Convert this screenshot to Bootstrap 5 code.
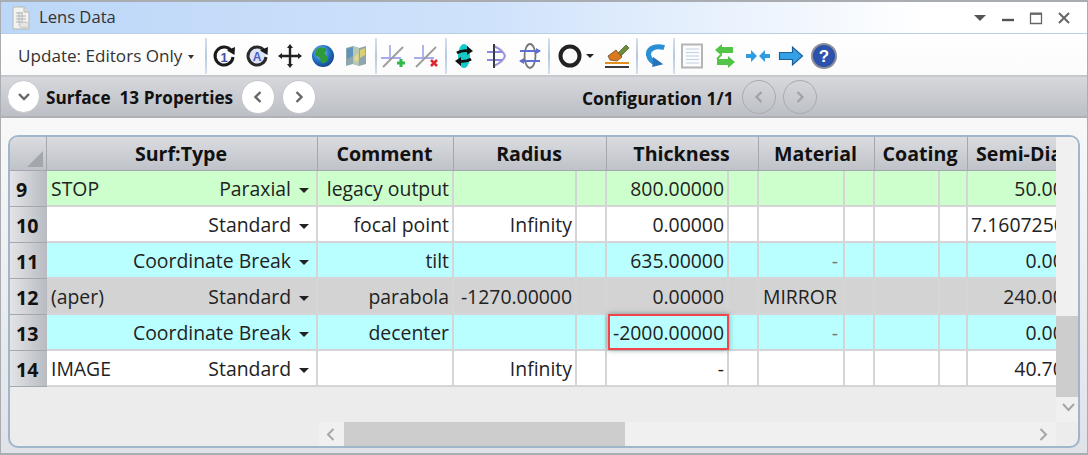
<!DOCTYPE html>
<html lang="en">
<head>
<meta charset="utf-8">
<title>Lens Data</title>
<link href="https://cdn.jsdelivr.net/npm/bootstrap@5.3.0/dist/css/bootstrap.min.css" rel="stylesheet">
<style>
html,body{height:100%;margin:0;background:#dfe3e8;overflow:hidden}
body{font-family:"Open Sans","Noto Sans",sans-serif;color:#222;font-size:19.4px}
.lens-win{height:455px;width:1088px;border:1px solid #a9adb2;border-bottom:2px solid #a9adb2;border-top:2px solid #a9adb2;overflow:hidden}
.title-bar{height:32px;background:linear-gradient(90deg,#bcd7f8 0%,#cfe2fb 45%,#fff 85%,#fff 100%);border-bottom:1px solid #b9cfe6;padding-left:10px;font-size:16.6px;color:#333}
.title-name{margin-left:8px}
.title-ctl{margin-left:auto;margin-right:9px}
.ctl-cell{width:28px;height:22px}
.tool-bar{height:43px;background:linear-gradient(#fff,#fbfbfb);border-bottom:2px solid #c5c8cc;padding-left:17px;padding-top:2px}
.update-btn{width:187px;font-size:17.1px;color:#333;white-space:nowrap}
.update-btn.dropdown-toggle::after{border-width:4px 3.5px 0;margin-left:6px;vertical-align:3px}
.tb-sep{width:2px;height:36px;background:linear-gradient(#d3e1ef,#b4c9de 50%,#d3e1ef);flex:none}
.tb-btn{width:33px;height:36px;flex:none}
.ring-cell{width:24px}
.caret-cell{width:16px}
.sp-a{margin-left:3px}
.sp-b{margin-left:2px}
.sp-c{margin-left:2px}
.band{height:41px;background:linear-gradient(#d6d8dc,#bcbfc5);border-bottom:2px solid #aeb2b7;padding-left:6px;font-weight:700;font-size:17.2px;color:#111}
.round-btn{width:34px;height:34px;padding:0;border:1px solid #c4c6ca;background:#fff;flex:none}
.round-btn:disabled{background:transparent;border:1px solid #a9abb0;opacity:1}
.band-first{width:33px;height:33px}
.band-label{margin-left:6px;width:195px;white-space:pre;padding-top:3px}
.band-cfg{margin-left:266px;width:160px;font-size:17.4px;padding-top:3px;white-space:nowrap}
.gap-band{gap:7px}
.lens-body{height:335px;background:linear-gradient(#f8f8f8,#dfe3e8);padding:17px 7px 5px 7px}
.lens-panel{height:313px;background:#ececec;border:2px solid #9fb6cb;border-radius:10px;overflow:hidden}
.lens-view{width:1046px;overflow:hidden;flex:none}
.vscroll{width:24px;background:#f0f0f0;flex:none;position:relative}
.vthumb{position:absolute;left:0;right:0;top:179px;height:81px;background:#cdcdcd}
.varrow{position:absolute;left:6px;top:266px}
.upper{height:285px}
.hscroll{height:24px;padding-left:309px}
.hs-track{background:#f0f0f0;width:737px;height:24px;position:relative}
.hs-thumb{position:absolute;left:25px;width:281px;top:0;bottom:0;background:#cdcdcd}
.hl{position:absolute;left:7px;top:6px}.hr{position:absolute;right:8px;top:6px}
table.lens-grid{table-layout:fixed;width:1092px;margin:0;border-collapse:separate;border-spacing:0;font-size:19.4px;color:#222;--bs-table-bg:transparent}
.lens-grid th,.lens-grid td{padding:2px 3px 0;height:36px;border:0;border-right:2px solid #d5d5d5;border-bottom:2px solid #d5d5d5;white-space:nowrap;overflow:hidden;text-align:right;vertical-align:middle;box-shadow:none;line-height:1}
.lens-grid thead th{height:34px;padding:0 5px 0 3px;background:linear-gradient(#dadce0,#bfc2c8);border-right:1px solid #a4a8ae;border-bottom:1px solid #a4a8ae;text-align:center;font-weight:700;font-size:19.6px;color:#111}
.lens-grid thead th.semi-head{padding-left:8px;padding-right:0;text-align:left}
.lens-grid tbody th{background:linear-gradient(90deg,#e2e4e7,#b8bbc1);border-right:0;border-bottom:1px solid #a4a8ae;text-align:left;font-weight:700;font-size:19.6px;color:#111;padding-left:6px}
.lens-grid thead th.corner{padding:0;position:relative}
.corner-mark{position:absolute;right:3px;bottom:3px}
.rw-green td{background:#ccffcc}
.rw-white td{background:#fff}
.rw-cyan td{background:#b9ffff}
.rw-gray td{background:#d3d3d3}
.surf-inner{padding-left:1px;padding-right:4px}
.surf-type.dropdown-toggle::after{border-width:5px 5px 0;margin-left:8px;vertical-align:3px;border-top-color:#222}
.lens-grid td.mat-left{text-align:left;padding-left:4px}
.lens-grid td.dim-dash{color:#777;padding-right:5px}
.lens-grid td.sel-host{position:relative;overflow:visible}
.sel-box{position:absolute;left:1px;top:-1px;right:-2px;bottom:-1px;border:2px solid #f2454b;box-shadow:0 0 5px rgba(40,80,80,.55);pointer-events:none}
</style>
</head>
<body>
<div class="lens-win d-flex flex-column">

  <div class="title-bar d-flex align-items-center flex-none">
    <svg width="20" height="24" viewBox="0 0 20 24"><path d="M2 1h11l5 5v17H2z" fill="#f2f2f0" stroke="#b8b8b4"/><path d="M13 1v5h5" fill="#ddd" stroke="#b8b8b4"/><path d="M5 7h7M5 10h10M5 13h10M5 16h6M8 6v11M11 6v11" stroke="#b4b4b4"/><ellipse cx="13" cy="19" rx="5" ry="3" fill="#e4e4e4" stroke="#c0c0c0"/></svg>
    <span class="title-name">Lens Data</span>
    <div class="title-ctl d-flex align-items-center">
      <div class="ctl-cell d-flex align-items-center justify-content-center"><svg width="14" height="8" viewBox="0 0 14 8"><path d="M1 1h12L7 7z" fill="#555"/></svg></div>
      <div class="ctl-cell d-flex align-items-center justify-content-center"><svg width="14" height="14" viewBox="0 0 14 14"><path d="M1 9h12" stroke="#555" stroke-width="2.4"/></svg></div>
      <div class="ctl-cell d-flex align-items-center justify-content-center"><svg width="14" height="14" viewBox="0 0 14 14"><path d="M1.5 3h11v9.500h-11z" fill="none" stroke="#666" stroke-width="1.3"/><path d="M1 2.500h12" stroke="#666" stroke-width="2"/></svg></div>
      <div class="ctl-cell d-flex align-items-center justify-content-center"><svg width="14" height="14" viewBox="0 0 14 14"><path d="M2 2l10 10M12 2L2 12" stroke="#666" stroke-width="2"/></svg></div>
    </div>
  </div>

  <div class="tool-bar d-flex align-items-center">
    <div class="update-btn dropdown-toggle">Update: Editors Only</div>
    <div class="tb-sep"></div>
    <div class="tb-btn d-flex align-items-center justify-content-center">
      <svg width="28" height="28" viewBox="0 0 28 28"><path d="M21.500 9A9 9 0 1 0 23 15" fill="none" stroke="#1a1a1a" stroke-width="3"/><path d="M17 8.500l8-3.500-.5 8z" fill="#1a1a1a"/><text x="14" y="19.500" text-anchor="middle" font-family="Liberation Sans" font-weight="700" font-size="13" fill="#3f4fa8">1</text></svg>
    </div>
    <div class="tb-btn d-flex align-items-center justify-content-center">
      <svg width="28" height="28" viewBox="0 0 28 28"><path d="M21.500 9A9 9 0 1 0 23 15" fill="#dfe3f7" stroke="#2a2a2a" stroke-width="3"/><path d="M17 8.500l8-3.500-.5 8z" fill="#1a1a1a"/><text x="14" y="19" text-anchor="middle" font-family="Liberation Sans" font-weight="700" font-size="12" fill="#4c5cc0">A</text></svg>
    </div>
    <div class="tb-btn d-flex align-items-center justify-content-center">
      <svg width="26" height="26" viewBox="0 0 26 26"><path d="M13 4v18M4 13h18" stroke="#222" stroke-width="2.400"/><path d="M13 1l3 4h-6zM13 25l3-4h-6zM1 13l4-3v6zM25 13l-4-3v6z" fill="#222"/></svg>
    </div>
    <div class="tb-btn d-flex align-items-center justify-content-center">
      <svg width="24" height="24" viewBox="0 0 24 24"><defs><radialGradient id="globeFill" cx=".4" cy=".35" r=".75"><stop offset="0" stop-color="#8fd0f5"/><stop offset=".55" stop-color="#1f6fc0"/><stop offset="1" stop-color="#123a7c"/></radialGradient></defs><circle cx="12" cy="12" r="11" fill="url(#globeFill)"/><path d="M6 5c3-2 7-2 9 0 1 2-2 3-1 5s4 2 3 5-4 5-6 4-1-5-3-6-4-1-4-3 1-3 2-5z" fill="#2f9a3c"/></svg>
    </div>
    <div class="tb-btn d-flex align-items-center justify-content-center">
      <svg width="24" height="24" viewBox="0 0 24 24"><path d="M2 4l7-2 6 2 7-2v18l-7 2-6-2-7 2z" fill="#8fa6ae"/><path d="M9 2l6 2v18l-6-2z" fill="#b9c8b0"/><path d="M3 5l6-2v9l-6 3z" fill="#5c93bf"/><path d="M16 6l5-2v7l-5 3z" fill="#d9cf73"/><path d="M10 13l4-4 1 7-4 2z" fill="#e0d88f"/></svg>
    </div>
    <div class="tb-sep sp-a"></div>
    <div class="tb-btn d-flex align-items-center justify-content-center">
      <svg width="28" height="28" viewBox="0 0 28 28"><path d="M10 3v15M1 16h20" stroke="#aaaaee" stroke-width="1.800"/><path d="M3 25L23 5" stroke="#9c9c9c" stroke-width="1.800"/><path d="M21 17v8M17 21h8" stroke="#35b84a" stroke-width="3"/></svg>
    </div>
    <div class="tb-btn d-flex align-items-center justify-content-center">
      <svg width="28" height="28" viewBox="0 0 28 28"><path d="M10 3v15M1 16h20" stroke="#aaaaee" stroke-width="1.800"/><path d="M3 25L23 5" stroke="#9c9c9c" stroke-width="1.800"/><path d="M18 18l6 6M24 18l-6 6" stroke="#dc2a36" stroke-width="2.600"/></svg>
    </div>
    <div class="tb-sep sp-c"></div>
    <div class="tb-btn d-flex align-items-center justify-content-center">
      <svg width="20" height="26" viewBox="0 0 20 26"><ellipse cx="10" cy="13" rx="6" ry="12" fill="#16c9c9"/><path d="M3 10c3-2 8-3 13-2" fill="none" stroke="#111" stroke-width="2.800"/><path d="M17 16c-3 2-8 3-13 2" fill="none" stroke="#111" stroke-width="2.800"/><path d="M13 3l6 5-6 4zM7 14l-6 4 6 5z" fill="#111"/></svg>
    </div>
    <div class="tb-btn d-flex align-items-center justify-content-center">
      <svg width="24" height="26" viewBox="0 0 24 26"><path d="M9 3c6 3 10 6 11 10-1 4-5 7-11 10" fill="none" stroke="#9898dc" stroke-width="2"/><path d="M2 9h15M2 17h15" stroke="#8a8ad6" stroke-width="2"/><path d="M9 1v24" stroke="#3a3a4a" stroke-width="2"/></svg>
    </div>
    <div class="tb-btn d-flex align-items-center justify-content-center">
      <svg width="24" height="26" viewBox="0 0 24 26"><ellipse cx="12" cy="13" rx="5.500" ry="12" fill="none" stroke="#777" stroke-width="1.800"/><path d="M2 8h20M2 18h20" stroke="#5f6fcf" stroke-width="2"/><path d="M18 5l5 3-5 3zM6 15l-5 3 5 3z" fill="#5f6fcf"/></svg>
    </div>
    <div class="tb-sep sp-c"></div>
    <div class="tb-btn ring-cell ms-2 d-flex align-items-center justify-content-center">
      <svg width="24" height="24" viewBox="0 0 24 24"><circle cx="12" cy="12" r="9.500" fill="none" stroke="#222" stroke-width="4"/></svg>
    </div>
    <div class="caret-cell d-flex align-items-center justify-content-center flex-none"><svg width="8" height="6" viewBox="0 0 8 6"><path d="M0 1h8L4 5z" fill="#222"/></svg></div>
    <div class="tb-btn sp-b d-flex align-items-center justify-content-center">
      <svg width="28" height="28" viewBox="0 0 28 28"><path d="M14 12l9-9 3 3-9 9z" fill="#6c8c3c" stroke="#4b6b2c" stroke-width=".8"/><path d="M5 14l8-6 6 7-5 4-7-1z" fill="#d9781f" stroke="#6e4a22" stroke-width=".8"/><path d="M2 21h24" stroke="#e0901c" stroke-width="2"/><path d="M2 25h24" stroke="#3a3a3a" stroke-width="2"/></svg>
    </div>
    <div class="tb-sep sp-a"></div>
    <div class="tb-btn d-flex align-items-center justify-content-center">
      <svg width="24" height="26" viewBox="0 0 26 28"><path d="M23 5C14 2 5 6 6 13c1 5 5 8 9 9" fill="none" stroke="#2b8fd6" stroke-width="5.500"/><path d="M11 15l11 8-12 3z" fill="#2674b8"/></svg>
    </div>
    <div class="tb-sep sp-b"></div>
    <div class="tb-btn d-flex align-items-center justify-content-center">
      <svg width="24" height="26" viewBox="0 0 24 26"><path d="M2 1.500h20v23H2z" fill="#fbfbfb" stroke="#b5b5b5" stroke-width="2"/><path d="M6 6h13M6 9.500h13M6 13h13M6 16.500h13M6 20h13" stroke="#c0d0e6"/></svg>
    </div>
    <div class="tb-btn d-flex align-items-center justify-content-center">
      <svg width="24" height="28" viewBox="0 0 24 28"><path d="M9 2L2 8l7 6v-3h11V5H9z" fill="#52c447"/><path d="M15 14l7 6-7 6v-3H4v-6h11z" fill="#52c447"/><path d="M4 17l4-4" stroke="#52c447" stroke-width="2"/></svg>
    </div>
    <div class="tb-btn d-flex align-items-center justify-content-center">
      <svg width="26" height="14" viewBox="0 0 26 14"><path d="M1 5h5V1l6 6-6 6V9H1zM25 5h-5V1l-6 6 6 6V9h5z" fill="#2f9be0"/></svg>
    </div>
    <div class="tb-btn d-flex align-items-center justify-content-center">
      <svg width="26" height="22" viewBox="0 0 26 22"><path d="M1.500 7.500h13V2L24.500 11l-10 9v-5.500h-13z" fill="#34a0e8" stroke="#1f5f98" stroke-width="1.200"/></svg>
    </div>
    <div class="tb-btn d-flex align-items-center justify-content-center">
      <svg width="26" height="26" viewBox="0 0 26 26"><circle cx="13" cy="13" r="12" fill="#2c52ac" stroke="#8a8f98" stroke-width="2"/><text x="13" y="19" text-anchor="middle" font-family="Liberation Sans" font-weight="700" font-size="17" fill="#fff">?</text></svg>
    </div>
  </div>

  <div class="band d-flex align-items-center">
    <button class="btn round-btn band-first rounded-circle d-flex align-items-center justify-content-center" type="button" aria-label="Collapse"><svg width="14" height="10" viewBox="0 0 14 10"><path d="M2 2l5 5 5-5" fill="none" stroke="#666" stroke-width="2.400"/></svg></button>
    <div class="band-label">Surface  13 Properties</div>
    <div class="d-flex gap-band">
      <button class="btn round-btn rounded-circle d-flex align-items-center justify-content-center" type="button" aria-label="Previous"><svg width="10" height="14" viewBox="0 0 10 14"><path d="M7.500 2l-5 5 5 5" fill="none" stroke="#666" stroke-width="2.400"/></svg></button>
      <button class="btn round-btn rounded-circle d-flex align-items-center justify-content-center" type="button" aria-label="Next"><svg width="10" height="14" viewBox="0 0 10 14"><path d="M2.500 2l5 5-5 5" fill="none" stroke="#666" stroke-width="2.400"/></svg></button>
    </div>
    <div class="band-cfg">Configuration 1/1</div>
    <div class="d-flex gap-band">
      <button class="btn round-btn rounded-circle d-flex align-items-center justify-content-center" type="button" disabled aria-label="Previous configuration"><svg width="10" height="14" viewBox="0 0 10 14"><path d="M7.500 2l-5 5 5 5" fill="none" stroke="#a0a2a6" stroke-width="2.200"/></svg></button>
      <button class="btn round-btn rounded-circle d-flex align-items-center justify-content-center" type="button" disabled aria-label="Next configuration"><svg width="10" height="14" viewBox="0 0 10 14"><path d="M2.500 2l5 5-5 5" fill="none" stroke="#a0a2a6" stroke-width="2.200"/></svg></button>
    </div>
  </div>

  <div class="lens-body">
    <div class="lens-panel d-flex flex-column">
      <div class="upper d-flex">
        <div class="lens-view">
          <table class="table lens-grid">
            <colgroup>
              <col style="width:37px"><col style="width:271px"><col style="width:136px"><col style="width:123px"><col style="width:30px"><col style="width:122px"><col style="width:30px"><col style="width:86px"><col style="width:30px"><col style="width:65px"><col style="width:28px"><col style="width:134px">
            </colgroup>
            <thead>
              <tr>
                <th class="corner"><svg class="corner-mark" width="16" height="16" viewBox="0 0 16 16"><path d="M16 0v16H0z" fill="#a3a6ab"/></svg></th>
                <th>Surf:Type</th><th>Comment</th><th colspan="2">Radius</th><th colspan="2">Thickness</th><th colspan="2">Material</th><th colspan="2">Coating</th><th class="semi-head">Semi-Diameter</th>
              </tr>
            </thead>
            <tbody>
              <tr class="rw-green">
                <th>9</th>
                <td><div class="surf-inner d-flex justify-content-between"><span>STOP</span><span class="surf-type dropdown-toggle">Paraxial</span></div></td>
                <td>legacy output</td><td></td><td></td><td>800.00000</td><td></td><td></td><td></td><td></td><td></td><td>50.00000</td>
              </tr>
              <tr class="rw-white">
                <th>10</th>
                <td><div class="surf-inner d-flex justify-content-between"><span></span><span class="surf-type dropdown-toggle">Standard</span></div></td>
                <td>focal point</td><td>Infinity</td><td></td><td>0.00000</td><td></td><td></td><td></td><td></td><td></td><td>7.1607250000</td>
              </tr>
              <tr class="rw-cyan">
                <th>11</th>
                <td><div class="surf-inner d-flex justify-content-between"><span></span><span class="surf-type dropdown-toggle">Coordinate Break</span></div></td>
                <td>tilt</td><td></td><td></td><td>635.00000</td><td></td><td class="dim-dash">-</td><td></td><td></td><td></td><td>0.00000</td>
              </tr>
              <tr class="rw-gray">
                <th>12</th>
                <td><div class="surf-inner d-flex justify-content-between"><span>(aper)</span><span class="surf-type dropdown-toggle">Standard</span></div></td>
                <td>parabola</td><td>-1270.00000</td><td></td><td>0.00000</td><td></td><td class="mat-left">MIRROR</td><td></td><td></td><td></td><td>240.00000</td>
              </tr>
              <tr class="rw-cyan">
                <th>13</th>
                <td><div class="surf-inner d-flex justify-content-between"><span></span><span class="surf-type dropdown-toggle">Coordinate Break</span></div></td>
                <td>decenter</td><td></td><td></td><td class="sel-host">-2000.00000<span class="sel-box"></span></td><td></td><td class="dim-dash">-</td><td></td><td></td><td></td><td>0.00000</td>
              </tr>
              <tr class="rw-white">
                <th>14</th>
                <td><div class="surf-inner d-flex justify-content-between"><span>IMAGE</span><span class="surf-type dropdown-toggle">Standard</span></div></td>
                <td></td><td>Infinity</td><td></td><td>-</td><td></td><td></td><td></td><td></td><td></td><td>40.70000</td>
              </tr>
            </tbody>
          </table>
        </div>
        <div class="vscroll">
          <div class="vthumb"></div>
          <svg class="varrow" width="13" height="9" viewBox="0 0 13 9"><path d="M1 1l5.500 6L12 1" fill="none" stroke="#a6a6a6" stroke-width="2"/></svg>
        </div>
      </div>
      <div class="hscroll">
        <div class="hs-track">
          <svg class="hl" width="9" height="13" viewBox="0 0 9 13"><path d="M7.500 1L2 6.500 7.500 12" fill="none" stroke="#a6a6a6" stroke-width="2"/></svg>
          <div class="hs-thumb"></div>
          <svg class="hr" width="9" height="13" viewBox="0 0 9 13"><path d="M1.500 1L7 6.500 1.500 12" fill="none" stroke="#a6a6a6" stroke-width="2"/></svg>
        </div>
      </div>
    </div>
  </div>
</div>
<script src="https://cdn.jsdelivr.net/npm/bootstrap@5.3.0/dist/js/bootstrap.bundle.min.js"></script>
</body>
</html>
